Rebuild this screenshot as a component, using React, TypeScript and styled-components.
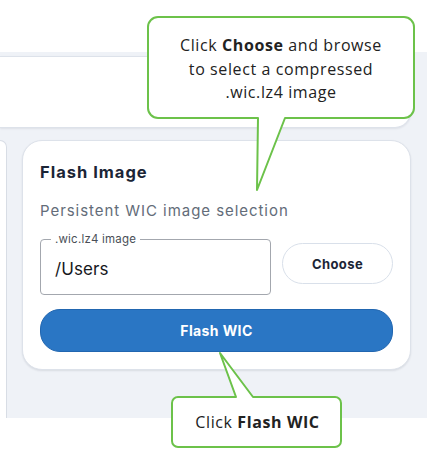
import React from "react";
import styled, { createGlobalStyle } from "styled-components";

const Global = createGlobalStyle`
  html, body { margin: 0; padding: 0; background: #ffffff; }
  body { font-family: Inter, "Noto Sans", sans-serif; }
  #root { position: relative; width: 443px; height: 466px; overflow: hidden; }
`;

const Page = styled.div`
  position: relative;
  width: 443px;
  height: 466px;
  padding-top: 52px;
  box-sizing: border-box;
`;

const Panel = styled.div`
  width: 427px;
  height: 366px;
  box-sizing: border-box;
  background: #eff2f7;
  overflow: hidden;
  padding: 4px 16px 0 0;
  display: flex;
  flex-direction: column;
  gap: 12px;
  & > * {
    flex-shrink: 0;
  }
`;

const TopCard = styled.div`
  height: 72px;
  box-sizing: border-box;
  background: #fff;
  border: 1px solid #dde2ea;
  border-left: none;
  border-radius: 0 16px 16px 0;
  box-shadow: 0 1px 2px rgba(20, 30, 50, 0.08);
`;

const Row = styled.div`
  display: grid;
  grid-template-columns: 7px 1fr;
  gap: 15px;
  align-items: start;
`;

const SideCard = styled.div`
  height: 320px;
  box-sizing: border-box;
  background: #fff;
  border: 1px solid #d8dde5;
  border-left: none;
  border-radius: 0 14px 0 0;
`;

const Card = styled.section`
  height: 230px;
  box-sizing: border-box;
  background: #fff;
  border: 1px solid #dde2ea;
  border-radius: 20px;
  box-shadow: 0 1px 2px rgba(20, 30, 50, 0.1);
  padding: 21px 17px 17px;
  display: flex;
  flex-direction: column;
`;

const Title = styled.h2`
  margin: 0 0 19px;
  font-size: 16.5px;
  line-height: 20px;
  font-weight: 700;
  letter-spacing: 1px;
  color: #1b2536;
`;

const Subtitle = styled.p`
  margin: 0 0 18px;
  font-size: 15px;
  line-height: 20px;
  font-weight: 400;
  letter-spacing: 0.95px;
  color: #636c79;
`;

const FieldRow = styled.div`
  display: grid;
  grid-template-columns: 231px 1fr;
  gap: 11px;
  align-items: start;
`;

const Field = styled.div`
  position: relative;
  height: 56px;
  box-sizing: border-box;
  border: 1px solid #a3a7ae;
  border-radius: 4px;
  display: flex;
  align-items: center;
  padding: 4px 14px 0;
`;

const FieldLabel = styled.span`
  position: absolute;
  top: -8px;
  left: 10px;
  padding: 0 4px;
  background: #fff;
  font-size: 11.5px;
  line-height: 14px;
  color: #4a4f57;
  letter-spacing: 0.2px;
`;

const FieldValue = styled.span`
  font-size: 17px;
  color: #16181d;
  letter-spacing: 0.1px;
`;

const GhostButton = styled.button`
  margin-top: 4px;
  height: 41px;
  border: 1px solid #d9e0ea;
  border-radius: 21px;
  background: #fff;
  font-family: Inter, "Noto Sans", sans-serif;
  font-size: 13px;
  font-weight: 700;
  letter-spacing: 0.4px;
  color: #1b2536;
`;

const PrimaryButton = styled.button`
  margin-top: 14px;
  height: 44px;
  border: 1px solid #2166b0;
  border-radius: 20px;
  background: #2a76c4;
  font-family: Inter, "Noto Sans", sans-serif;
  font-size: 14px;
  font-weight: 700;
  letter-spacing: 0.4px;
  color: #fff;
`;

const Bubble = styled.div<{ $left: number; $top: number; $w: number; $h: number }>`
  position: absolute;
  left: ${(p) => p.$left}px;
  top: ${(p) => p.$top}px;
  width: ${(p) => p.$w}px;
  height: ${(p) => p.$h}px;
  svg {
    position: absolute;
    inset: 0;
    overflow: visible;
  }
`;

const BubbleText = styled.div<{ $padTop: number }>`
  position: relative;
  padding-top: ${(p) => p.$padTop}px;
  text-align: center;
  font-family: "Open Sans", "Noto Sans", sans-serif;
  font-size: 16px;
  line-height: 23.5px;
  letter-spacing: 0.6px;
  color: #222;
  b {
    font-weight: 700;
  }
`;

const GREEN = "#6cc24a";

export default function App() {
  return (
    <>
      <Global />
      <Page>
        <Panel>
          <TopCard />
          <Row>
            <SideCard />
            <Card>
              <Title>Flash Image</Title>
              <Subtitle>Persistent WIC image selection</Subtitle>
              <FieldRow>
                <Field>
                  <FieldLabel>.wic.lz4 image</FieldLabel>
                  <FieldValue>/Users</FieldValue>
                </Field>
                <GhostButton>Choose</GhostButton>
              </FieldRow>
              <PrimaryButton>Flash WIC</PrimaryButton>
            </Card>
          </Row>
        </Panel>

        <Bubble $left={147} $top={16} $w={268} $h={176}>
          <svg width="268" height="176" viewBox="0 0 268 176">
            <path
              d="M 11 1 H 257 A 10 10 0 0 1 267 11 V 92 A 10 10 0 0 1 257 102 H 138 L 110 174 L 111 102 H 11 A 10 10 0 0 1 1 92 V 11 A 10 10 0 0 1 11 1 Z"
              fill="#fff"
              stroke={GREEN}
              strokeWidth="2"
              strokeLinejoin="round"
            />
          </svg>
          <BubbleText $padTop={18}>
            Click <b>Choose</b> and browse
            <br />
            to select a compressed
            <br />
            .wic.lz4 image
          </BubbleText>
        </Bubble>

        <Bubble $left={171} $top={352} $w={173} $h={96}>
          <svg width="173" height="96" viewBox="0 0 173 96">
            <path
              d="M 7 45 H 65 L 49 1 L 82 45 H 164 A 6 6 0 0 1 170 51 V 89 A 6 6 0 0 1 164 95 H 7 A 6 6 0 0 1 1 89 V 51 A 6 6 0 0 1 7 45 Z"
              fill="#fff"
              stroke={GREEN}
              strokeWidth="2"
              strokeLinejoin="round"
            />
          </svg>
          <BubbleText $padTop={59}>
            Click <b>Flash WIC</b>
          </BubbleText>
        </Bubble>
      </Page>
    </>
  );
}
